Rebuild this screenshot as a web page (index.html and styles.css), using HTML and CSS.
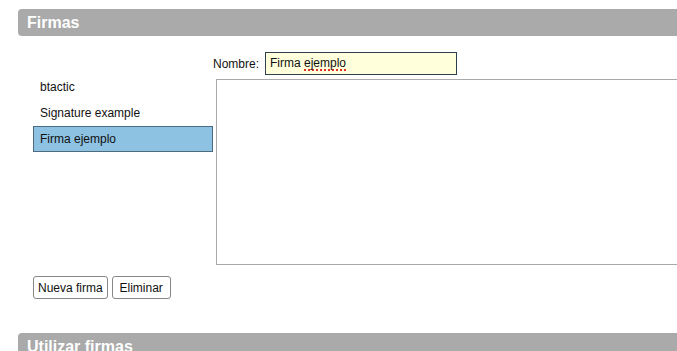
FILE: index.html
```html
<!DOCTYPE html>
<html>
    <head>
        <meta charset="utf-8" />
        <title>Firmas</title>
        <link rel="stylesheet" href="styles.css">
    </head>
    <body>
        <div class="section">
            <h2 class="section-title">Firmas</h2>

            <div class="signatures">
                <ul class="sig-list">
                    <li class="sig-item">btactic</li>
                    <li class="sig-item">Signature example</li>
                    <li class="sig-item selected">Firma ejemplo</li>
                </ul>

                <div class="sig-editor">
                    <div class="name-row">
                        <label for="sig-name">Nombre:</label>
                        <div class="name-input" id="sig-name">Firma <span class="misspelled">ejemplo</span></div>
                    </div>
                    <div class="sig-body"></div>
                </div>
            </div>

            <div class="actions">
                <button type="button">Nueva firma</button>
                <button type="button" class="btn-delete">Eliminar</button>
            </div>
        </div>

        <div class="section">
            <h2 class="section-title">Utilizar firmas</h2>
        </div>
    </body>
</html>
```

FILE: styles.css
```css
* {
    box-sizing: border-box;
    margin: 0;
    padding: 0;
}

body {
    font-family: "Liberation Sans", Arial, sans-serif;
    font-size: 12px;
    color: #111;
    background-color: #fff;
    overflow: hidden;
    padding-top: 9px;
}

.section {
    margin-left: 18px;
    margin-right: -30px;
}

.section-title {
    height: 27px;
    line-height: 28px;
    padding-left: 9px;
    font-size: 16px;
    font-weight: bold;
    color: #fff;
    background-color: #aaa;
    border-radius: 4px 0 0 4px;
    margin-bottom: 16px;
}

.signatures {
    display: flex;
    padding-left: 15px;
}

.sig-list {
    list-style: none;
    width: 180px;
    padding-top: 22px;
}

.sig-item {
    height: 26px;
    line-height: 24px;
    padding-left: 6px;
    border: 1px solid transparent;
}

.sig-item.selected {
    background-color: #8ec2e3;
    border-color: #4d6b80;
}

.sig-editor {
    flex: 1;
}

.name-row {
    display: flex;
    align-items: center;
    gap: 6px;
}

.name-input {
    width: 192px;
    height: 23px;
    line-height: 21px;
    padding-left: 4px;
    background-color: #ffffdc;
    border: 1px solid #2f3f4c;
}

.misspelled {
    text-decoration: underline dotted #e0302a;
    text-decoration-thickness: 2px;
    text-underline-offset: 2px;
}

.sig-body {
    height: 186px;
    margin: 4px 0 0 3px;
    border: 1px solid #aaa;
}

.actions {
    display: flex;
    gap: 4px;
    padding-left: 15px;
    margin-top: 11px;
    margin-bottom: 34px;
}

button {
    height: 23px;
    padding: 0 4px;
    font-family: inherit;
    font-size: 12px;
    color: #111;
    background-color: #fff;
    border: 1px solid #888;
    border-radius: 3px;
}

.btn-delete {
    width: 59px;
}
```
